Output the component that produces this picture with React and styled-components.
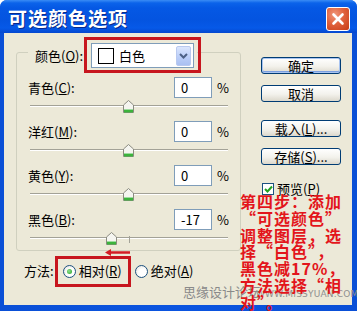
import React from "react";
import styled, { createGlobalStyle, css } from "styled-components";

const Global = createGlobalStyle`
  html, body { margin: 0; padding: 0; background: #ffffff; }
  body { font-family: "Noto Sans CJK SC", "Liberation Sans", sans-serif; }
  * { box-sizing: border-box; }
`;

const FONT = `"Noto Sans CJK SC", "Liberation Sans", sans-serif`;

const Window = styled.div`
  width: 357px;
  height: 311px;
  background: linear-gradient(to right, #0a4fd6, #0b55e0 50%, #0a4fd6);
  border-radius: 7px 7px 0 0;
  display: flex;
  flex-direction: column;
  overflow: hidden;
`;

const TitleBar = styled.div`
  height: 33px;
  flex: none;
  display: flex;
  align-items: flex-start;
  padding: 0 7px 0 8px;
  background: linear-gradient(
    to bottom,
    #3a8cf5 0px,
    #0b63ea 3px,
    #0558e4 8px,
    #0454e0 20px,
    #0659e8 28px,
    #0548cf 33px
  );
`;

const TitleText = styled.div`
  margin-top: 6px;
  font: bold 19px/24px ${FONT};
  letter-spacing: 1px;
  color: #ffffff;
  text-shadow: 1px 1px 0 #0a2a8a;
`;

const CloseButton = styled.div`
  margin-left: auto;
  margin-top: 7px;
  width: 24px;
  height: 24px;
  border: 1px solid #ffffff;
  border-radius: 3px;
  background: radial-gradient(circle at 35% 30%, #f0977a 0%, #e0623d 45%, #c73c16 100%);
  display: flex;
  align-items: center;
  justify-content: center;
`;

const Body = styled.div`
  flex: 1;
  margin: 0 5px 6px 4px;
  background: #ece9d8;
  position: relative;
  display: flex;
  align-items: flex-start;
`;

const LeftCol = styled.div`
  width: 240px;
  display: flex;
  flex-direction: column;
`;

const GroupBox = styled.div`
  margin: 19px 0 0 12px;
  width: 225px;
  border: 1px solid #d0d0bf;
  border-radius: 3px;
`;

const Legend = styled.div`
  margin: -10px 0 0 11px;
  width: fit-content;
  height: 25px;
  padding: 0 3px 0 7px;
  background: #ece9d8;
  display: flex;
  align-items: center;
  gap: 8px;
`;

const Label = styled.span`
  font: 13px/16px ${FONT};
  color: #000000;
  white-space: nowrap;
`;

const Highlight = styled.div`
  position: relative;
  &::after {
    content: "";
    position: absolute;
    inset: ${(p) => p.$inset};
    border: 3px solid #c7161e;
    pointer-events: none;
  }
`;

const Combo = styled.div`
  width: 103px;
  height: 25px;
  border: 1px solid #7f9db9;
  background: #ffffff;
  display: flex;
  align-items: center;
  padding-left: 6px;
`;

const Swatch = styled.div`
  width: 16px;
  height: 16px;
  border: 1px solid #000000;
  background: #ffffff;
`;

const ComboText = styled.span`
  margin-left: 5px;
  font: 13px/16px ${FONT};
  color: #000000;
`;

const ComboArrow = styled.div`
  margin-left: auto;
  margin-right: 2px;
  width: 15px;
  height: 20px;
  border-radius: 2px;
  background: linear-gradient(to bottom, #dbe6fd, #b9cdf8 60%, #aac0f2);
  border: 1px solid #b9c9ef;
  display: flex;
  align-items: center;
  justify-content: center;
`;

const Sliders = styled.div`
  padding: 0 11px 0 11px;
  margin-top: 9px;
  display: flex;
  flex-direction: column;
`;

const SliderBlock = styled.div`
  margin-top: ${(p) => (p.$first ? 0 : 3)}px;
`;

const ValueRow = styled.div`
  height: 21px;
  display: flex;
  align-items: center;
`;

const RowLabel = styled.span`
  flex: 1;
  font: 13px/16px ${FONT};
  color: #000000;
`;

const ValueBox = styled.div`
  width: 38px;
  height: 21px;
  border: 1px solid #7f9db9;
  background: #ffffff;
  padding-left: 6px;
  font: 13px/19px ${FONT};
  color: #000000;
`;

const Percent = styled.span`
  margin-left: 5px;
  width: 12px;
  font: 13px/16px ${FONT};
  color: #000000;
`;

const TrackBox = styled.div`
  position: relative;
  height: 20px;
  margin: 0 1px 0 2px;
`;

const TrackLine = styled.div`
  position: relative;
  top: 7px;
  height: 2px;
  border-top: 1px solid #a3a297;
  border-bottom: 1px solid #ffffff;
`;

const Tick = styled.div`
  position: absolute;
  top: 6px;
  left: 50%;
  width: 1px;
  height: 7px;
  background: #a3a297;
`;

const Thumb = styled.svg`
  position: absolute;
  top: 2px;
  margin-left: -6px;
`;

const MethodRow = styled.div`
  margin-top: 10px;
  height: 20px;
  padding-left: 20px;
  display: flex;
  align-items: center;
`;

const RadioGroup = styled.div`
  margin-left: 9px;
  display: flex;
  align-items: center;
  gap: 13px;
`;

const RadioOption = styled.div`
  display: flex;
  align-items: center;
  gap: 3px;
`;

const RadioCircle = styled.div`
  width: 13px;
  height: 13px;
  border-radius: 50%;
  border: 1px solid #1c5180;
  background: radial-gradient(circle at 60% 60%, #ffffff 40%, #dcdcd4);
  display: flex;
  align-items: center;
  justify-content: center;
  &::after {
    content: "";
    display: ${(p) => (p.$checked ? "block" : "none")};
    width: 5px;
    height: 5px;
    border-radius: 50%;
    background: radial-gradient(circle at 40% 40%, #8fe08f, #21a121);
  }
`;

const RightCol = styled.div`
  margin-left: 17px;
  padding-top: 24px;
  display: flex;
  flex-direction: column;
`;

const Button = styled.div`
  width: 80px;
  height: 17px;
  margin-top: ${(p) => p.$gap || 0}px;
  border: 1px solid #003c74;
  border-radius: 3px;
  background: linear-gradient(to bottom, #ffffff, #f3f2ec 55%, #dcd8cc);
  font: 13px/15px ${FONT};
  color: #000000;
  text-align: center;
  ${(p) =>
    p.$default &&
    css`
      box-shadow: inset 0 0 0 1px #a9c4f0, inset 0 -1px 0 1px #7b9fe0;
    `}
`;

const CheckRow = styled.div`
  margin-top: 16px;
  margin-left: 1px;
  display: flex;
  align-items: center;
  gap: 3px;
`;

const CheckBox = styled.div`
  width: 12px;
  height: 12px;
  border: 1px solid #1c5180;
  background: #ffffff;
  display: flex;
  align-items: center;
  justify-content: center;
`;

const Note = styled.div`
  position: absolute;
  left: 236px;
  top: 160px;
  font: bold 16px/16.8px ${FONT};
  letter-spacing: 1px;
  color: #e3151b;
  white-space: nowrap;
`;

const NoteLine = styled.div``;

const Quote = styled.span`
  font-feature-settings: "fwid" 1;
`;

const Watermark = styled.div`
  position: absolute;
  left: 179px;
  top: 251px;
  font: 13px/16px ${FONT};
  color: #8a8a8a;
  white-space: nowrap;
`;

const WatermarkUrl = styled.div`
  position: absolute;
  left: 252px;
  top: 256px;
  font: 9px/10px "DejaVu Sans", sans-serif;
  color: #8f8f8f;
  letter-spacing: 0.2px;
  white-space: nowrap;
`;

const Arrow = styled.svg`
  position: absolute;
  left: 100px;
  top: 215px;
`;

function ThumbIcon({ pct }) {
  return (
    <Thumb width="11" height="13" viewBox="0 0 11 13" style={{ left: `${pct}%` }}>
      <path d="M5.5 0.5 L10.5 5 L10.5 12.5 L0.5 12.5 L0.5 5 Z" fill="#f5f5f0" stroke="#8b8b80" />
      <rect x="1" y="10" width="9" height="2.5" fill="#3cb33c" />
      <path d="M1 9.5 H10" stroke="#9fdc9f" />
    </Thumb>
  );
}

const sliders = [
  { label: "青色", key: "C", value: 0 },
  { label: "洋红", key: "M", value: 0 },
  { label: "黄色", key: "Y", value: 0 },
  { label: "黑色", key: "B", value: -17 },
];

export default function App() {
  return (
    <>
      <Global />
      <Window>
        <TitleBar>
          <TitleText>可选颜色选项</TitleText>
          <CloseButton>
            <svg width="14" height="14" viewBox="0 0 14 14">
              <path d="M2.5 2.5 L11.5 11.5 M11.5 2.5 L2.5 11.5" stroke="#ffffff" strokeWidth="2.6" strokeLinecap="round" />
            </svg>
          </CloseButton>
        </TitleBar>
        <Body>
          <LeftCol>
            <GroupBox>
              <Legend>
                <Label>
                  颜色(<u>O</u>):
                </Label>
                <Highlight $inset="-6px -7px -5px -7px">
                  <Combo>
                    <Swatch />
                    <ComboText>白色</ComboText>
                    <ComboArrow>
                      <svg width="9" height="6" viewBox="0 0 9 6">
                        <path d="M1 1 L4.5 4.5 L8 1" fill="none" stroke="#4d6185" strokeWidth="2" />
                      </svg>
                    </ComboArrow>
                  </Combo>
                </Highlight>
              </Legend>
              <Sliders>
                {sliders.map((s, i) => (
                  <SliderBlock key={s.key} $first={i === 0}>
                    <ValueRow>
                      <RowLabel>
                        {s.label}(<u>{s.key}</u>):
                      </RowLabel>
                      <ValueBox>{s.value}</ValueBox>
                      <Percent>%</Percent>
                    </ValueRow>
                    <TrackBox>
                      <TrackLine />
                      {s.value !== 0 && <Tick />}
                      <ThumbIcon pct={((s.value + 100) / 200) * 100} />
                    </TrackBox>
                  </SliderBlock>
                ))}
              </Sliders>
            </GroupBox>
            <MethodRow>
              <Label>方法:</Label>
              <RadioGroup>
                <Highlight $inset="-7px -9px -8px -8px">
                  <RadioOption>
                    <RadioCircle $checked />
                    <Label>
                      相对(<u>R</u>)
                    </Label>
                  </RadioOption>
                </Highlight>
                <RadioOption>
                  <RadioCircle />
                  <Label>
                    绝对(<u>A</u>)
                  </Label>
                </RadioOption>
              </RadioGroup>
            </MethodRow>
          </LeftCol>
          <RightCol>
            <Button $default>确定</Button>
            <Button $gap={11}>取消</Button>
            <Button $gap={18}>
              载入(<u>L</u>)...
            </Button>
            <Button $gap={11}>
              存储(<u>S</u>)...
            </Button>
            <CheckRow>
              <CheckBox>
                <svg width="9" height="8" viewBox="0 0 9 8">
                  <path d="M1 4 L3.5 6.5 L8 1.5" fill="none" stroke="#21a121" strokeWidth="2" />
                </svg>
              </CheckBox>
              <Label>
                预览(<u>P</u>)
              </Label>
            </CheckRow>
          </RightCol>
          <Arrow width="27" height="9" viewBox="0 0 27 9">
            <path d="M26 4.5 H5" stroke="#d41c24" strokeWidth="2.5" />
            <path d="M1 4.5 L7 1 L7 8 Z" fill="#d41c24" />
          </Arrow>
          <Watermark>思缘设计论坛</Watermark>
          <WatermarkUrl>WWW.MISSYUAN.COM</WatermarkUrl>
          <Note>
            <NoteLine>第四步：添加</NoteLine>
            <NoteLine>
              <Quote>“</Quote>可选颜色<Quote>”</Quote>
            </NoteLine>
            <NoteLine>调整图层，选</NoteLine>
            <NoteLine>
              择<Quote>“</Quote>白色<Quote>”</Quote>，
            </NoteLine>
            <NoteLine>黑色减17%，</NoteLine>
            <NoteLine>
              方法选择<Quote>“</Quote>相
            </NoteLine>
            <NoteLine>
              对<Quote>”</Quote>。
            </NoteLine>
          </Note>
        </Body>
      </Window>
    </>
  );
}
